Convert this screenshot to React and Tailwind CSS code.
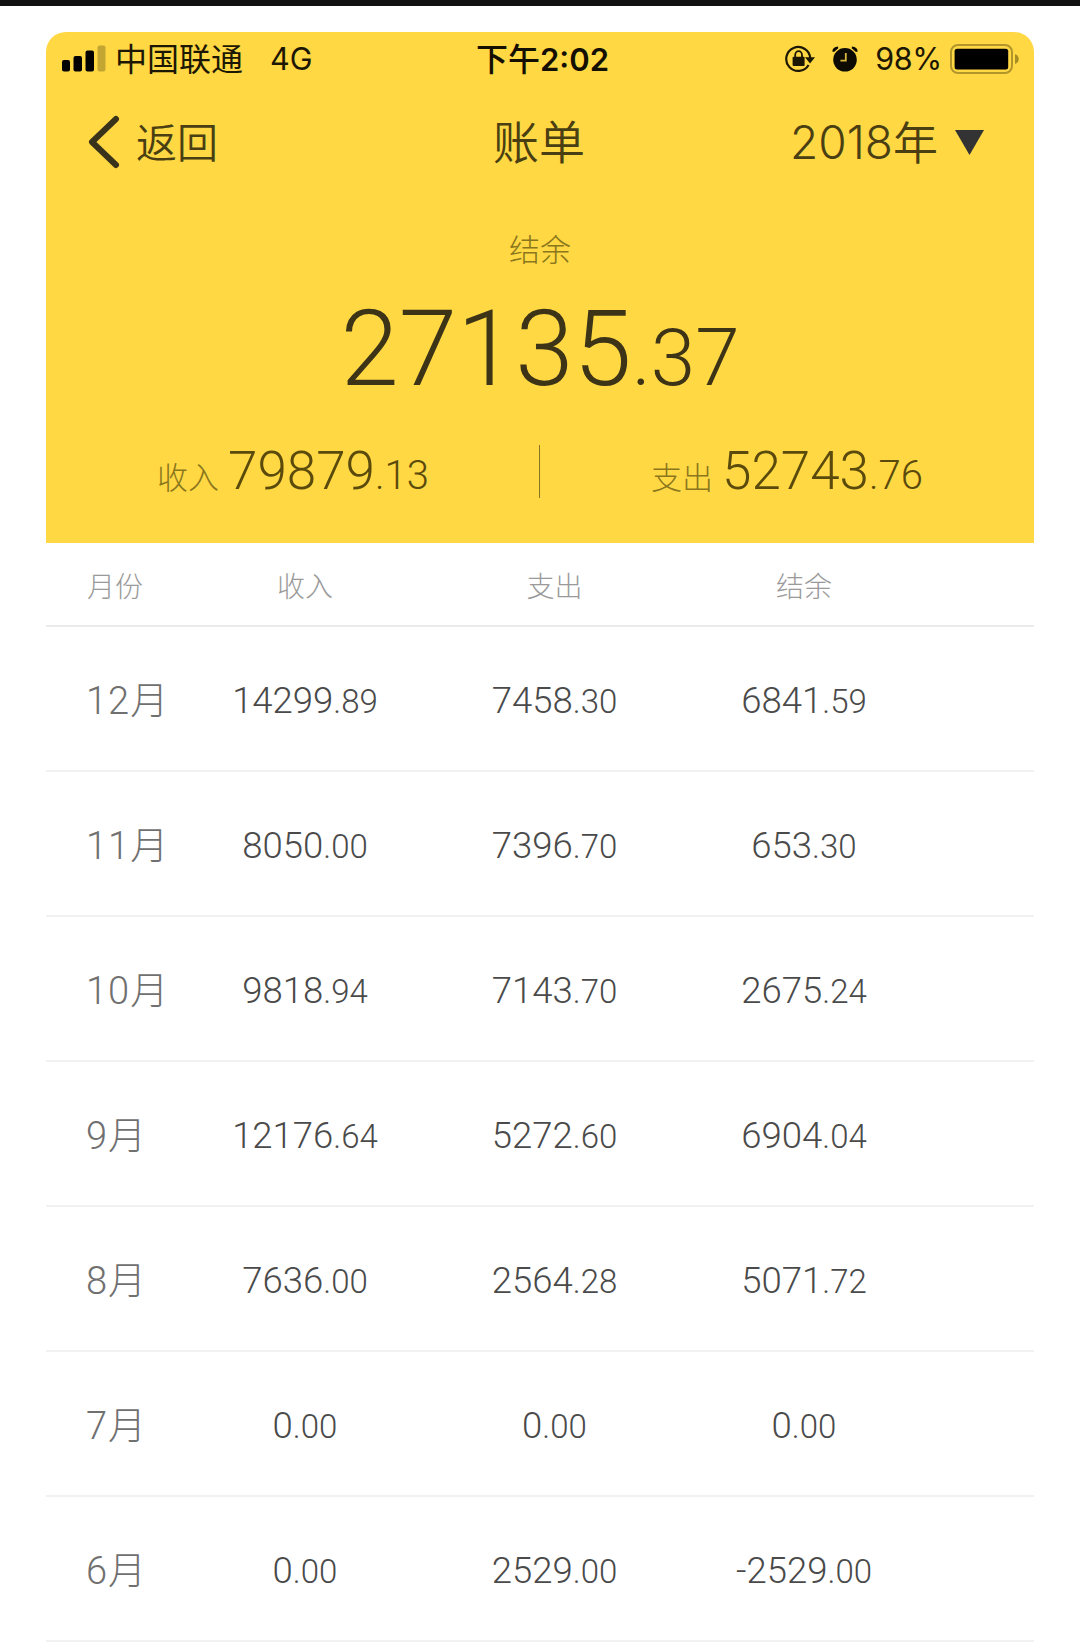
import React from 'react';

const months = [
  { month: 12, income: '14299.89', expense: '7458.30', balance: '6841.59' },
  { month: 11, income: '8050.00', expense: '7396.70', balance: '653.30' },
  { month: 10, income: '9818.94', expense: '7143.70', balance: '2675.24' },
  { month: 9, income: '12176.64', expense: '5272.60', balance: '6904.04' },
  { month: 8, income: '7636.00', expense: '2564.28', balance: '5071.72' },
  { month: 7, income: '0.00', expense: '0.00', balance: '0.00' },
  { month: 6, income: '0.00', expense: '2529.00', balance: '-2529.00' },
];

// integer part large, decimals smaller
const Amount = ({ value, className = '', decimalClass }) => {
  const [whole, cents] = value.split('.');
  return (
    <span className={`whitespace-nowrap font-['Roboto',sans-serif] leading-none font-light ${className}`}>
      {whole}<span className={decimalClass}>.{cents}</span>
    </span>
  );
};

const SignalIcon = () => (
  <svg width="45" height="28" viewBox="0 0 45 28">
    <rect x="1" y="15" width="8" height="11.5" rx="2" fill="#000" />
    <rect x="12.5" y="11" width="8.5" height="15.5" rx="2" fill="#000" />
    <rect x="24.5" y="5.5" width="8.5" height="21" rx="2" fill="#000" />
    <rect x="36.5" y="0.5" width="8" height="26" rx="2" fill="#c3a632" />
  </svg>
);

const RotationLockIcon = () => (
  <svg width="30" height="28" viewBox="0 0 30 28" fill="none" stroke="#1c1703">
    <path d="M23.6 20A12 12 0 1 1 25.2 13" strokeWidth="2.2" />
    <path d="M20 12.200h10l-5 6.200z" fill="#1c1703" stroke="none" />
    <rect x="7.6" y="11.8" width="12" height="9.2" rx="1" fill="#1c1703" stroke="none" />
    <path d="M10.200 12.500V10a3.400 3.800 0 0 1 6.800 0v2.500" strokeWidth="1.8" />
  </svg>
);

const AlarmIcon = () => (
  <svg width="26" height="26" viewBox="0 0 26 26">
    <circle cx="13" cy="13.8" r="11.8" fill="#0d0b02" />
    <path d="M0.300 5.600Q0.500 1 6 0.600L6.300 2.200 2 5.900zM25.700 5.600Q25.500 1 20 0.600L19.700 2.200 24 5.900z" fill="#0d0b02" />
    <path d="M13.800 7v7.600H8.400" fill="none" stroke="#d9b93c" strokeWidth="1.8" />
  </svg>
);

const BatteryIcon = () => (
  <svg width="70" height="30" viewBox="0 0 70 30">
    <rect x="1" y="1" width="61" height="28" rx="7" fill="none" stroke="#b2962b" strokeWidth="2" />
    <rect x="4.6" y="4.8" width="53.6" height="20.6" rx="2.5" fill="#000" />
    <path d="M65 10.200c5 1.200 5 8.600 0 9.800z" fill="#a88d25" />
  </svg>
);

const StatusBar = () => (
  <div className="grid grid-cols-3 h-[54px] items-center pl-[15px] pr-[14px] text-[#1c1703] leading-none">
    <div className="flex items-center">
      <SignalIcon />
      <span className="ml-[9px] pb-[5px] font-['Noto_Sans_CJK_SC',sans-serif] text-[32px]">中国联通</span>
      <span className="ml-[27px] font-['Inter',sans-serif] text-[30.5px]">4G</span>
    </div>
    <div className="flex items-center justify-center pl-1 font-medium text-[#140f00]">
      <span className="pb-[5px] font-['Noto_Sans_CJK_SC',sans-serif] text-[32px]">下午</span>
      <span className="font-['Inter',sans-serif] text-[31px] font-semibold">2:02</span>
    </div>
    <div className="flex items-center justify-end">
      <RotationLockIcon />
      <span className="ml-[17px] flex"><AlarmIcon /></span>
      <span className="ml-[17px] mr-[8px] font-['Inter',sans-serif] text-[30.5px] tracking-[-0.3px]">98%</span>
      <BatteryIcon />
    </div>
  </div>
);

const NavBar = () => (
  <div className="grid grid-cols-3 h-[112px] items-center pl-[41px] pr-[50px] text-[#4a3f12] leading-none">
    <div className="flex items-center">
      <svg width="33" height="54" viewBox="0 0 33 54" fill="none">
        <path d="M29 4 5 27 29 50" stroke="#3a331b" strokeWidth="6" strokeLinecap="round" strokeLinejoin="round" />
      </svg>
      <span className="ml-[16px] pb-[4px] font-['Noto_Sans_CJK_SC',sans-serif] text-[41px] font-[350]">返回</span>
    </div>
    <div className="pl-[7px] pb-[7px] text-center font-['Noto_Sans_CJK_SC',sans-serif] text-[46px] font-[350]">账单</div>
    <div className="flex items-center justify-end">
      <span className="font-['Inter',sans-serif] text-[46px] font-[350]">2018</span>
      <span className="pb-[4px] font-['Noto_Sans_CJK_SC',sans-serif] text-[45px] font-[350]">年</span>
      <svg className="ml-[17px]" width="29" height="25" viewBox="0 0 29 25">
        <path d="M0 0h29L14.500 25z" fill="#333" />
      </svg>
    </div>
  </div>
);

const Total = ({ label, value }) => (
  <div className="flex flex-1 items-baseline justify-center gap-[9px]">
    <span className="text-[31px] leading-none font-light text-[#8a761c]">{label}</span>
    <Amount value={value} className="text-[53px]" decimalClass="text-[40px]" />
  </div>
);

const Summary = () => (
  <div className="flex flex-col items-center pt-[34px] font-['Noto_Sans_CJK_SC',sans-serif]">
    <span className="text-[31px] leading-none font-light text-[#8a761c]">结余</span>
    <Amount value="27135.37" className="mt-[34px] text-[105px] text-[#3d3418]" decimalClass="text-[80px]" />
    <div className="mt-[43px] flex w-full items-center text-[#5a4a0c]">
      <Total label="收入" value="79879.13" />
      <div className="-ml-px h-[53px] w-px bg-[#8a7420]" />
      <Total label="支出" value="52743.76" />
    </div>
  </div>
);

const MonthRow = ({ month, income, expense, balance }) => (
  <div className="grid h-[145px] grid-cols-[134px_250px_249px_250px] items-center border-b-2 border-[#f1f1f1] pt-[5px] text-[#4a4a4a]">
    <div className="pl-10 font-['Roboto','Noto_Sans_CJK_SC',sans-serif] text-[38px] leading-none font-light whitespace-nowrap text-[#707070]">
      <span className="tracking-[1px]">{month}</span>月
    </div>
    {[income, expense, balance].map((value, i) => (
      <div key={i} className="flex justify-center">
        <Amount value={value} className="text-[36.5px]" decimalClass="text-[33px]" />
      </div>
    ))}
  </div>
);

const App = () => (
  <div className="h-[1642px] w-[1080px] overflow-hidden bg-white">
    <div className="h-[6px] bg-[#111]" />
    <div className="px-[46px] pt-[26px]">
      <header className="h-[511px] rounded-t-[20px] bg-[#ffd843]">
        <StatusBar />
        <NavBar />
        <Summary />
      </header>
      <div className="grid h-[84px] grid-cols-[134px_250px_249px_250px] items-center border-b-2 border-[#ebebeb] pt-px text-center font-['Noto_Sans_CJK_SC',sans-serif] text-[28px] leading-none font-light text-[#9a9a9a]">
        <div className="pl-[41px] text-left">月份</div>
        <div>收入</div>
        <div>支出</div>
        <div>结余</div>
      </div>
      {months.map((row) => (
        <MonthRow key={row.month} {...row} />
      ))}
    </div>
  </div>
);

export default App;
